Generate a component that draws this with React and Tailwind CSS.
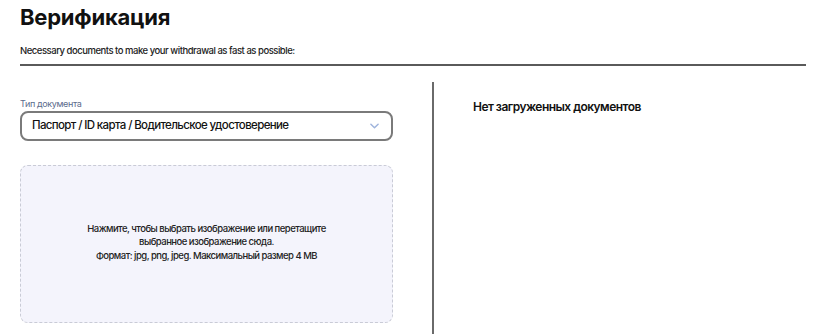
import React from 'react';

const ChevronDown = () => (
  <svg width="9" height="6" viewBox="0 0 10 6" fill="none">
    <path d="M1 1l4 4 4-4" stroke="#9fb4dc" strokeWidth="1.6" strokeLinecap="round" strokeLinejoin="round" />
  </svg>
);

export default function App() {
  return (
    <div className="w-[816px] h-[334px] overflow-hidden bg-white text-[#111] font-['Inter',sans-serif]">
      <div className="pl-[20px] pr-[10px]">
        <h1 className="pt-[4px] text-[22px] leading-[26px] font-bold tracking-[-0.01em]">Верификация</h1>
        <p className="mt-[15px] text-[9.5px] leading-[12px] font-medium tracking-[-0.05em] text-[#222]">
          Necessary documents to make your withdrawal as fast as possible:
        </p>
        <div className="mt-[7px] h-[2px] bg-[#5a5a5a]" />
      </div>

      <div className="flex mt-[16px] h-[260px]">
        {/* left column */}
        <div className="w-[432px] shrink-0 pl-[20px] pt-[16px]">
          <label className="block text-[9px] leading-[11px] tracking-[-0.04em] text-[#5b6b8c]">Тип документа</label>
          <div className="mt-[2px] h-[30px] w-[373px] flex items-center justify-between pl-[10px] pr-[12px] border-2 border-[#7a7a7a] rounded-[8px]">
            <span className="text-[11.5px] font-medium tracking-[-0.055em]">Паспорт / ID карта / Водительское удостоверение</span>
            <ChevronDown />
          </div>
          <div className="mt-[24px] h-[158px] w-[373px] flex flex-col items-center justify-center border border-dashed border-[#c9cbd6] rounded-[8px] bg-[#f4f4fc] text-center text-[9.5px] leading-[13.5px] font-medium tracking-[-0.055em] text-[#222]">
            <p className="mt-[-4px]">Нажмите, чтобы выбрать изображение или перетащите</p>
            <p>выбранное изображение сюда.</p>
            <p>Формат: jpg, png, jpeg. Максимальный размер 4 MB</p>
          </div>
        </div>
        {/* divider */}
        <div className="w-[2px] bg-[#6a6a6a]" />
        {/* right column */}
        <div className="pl-[39px] pt-[16px]">
          <p className="text-[12px] font-semibold tracking-[-0.045em]">Нет загруженных документов</p>
        </div>
      </div>
    </div>
  );
}
